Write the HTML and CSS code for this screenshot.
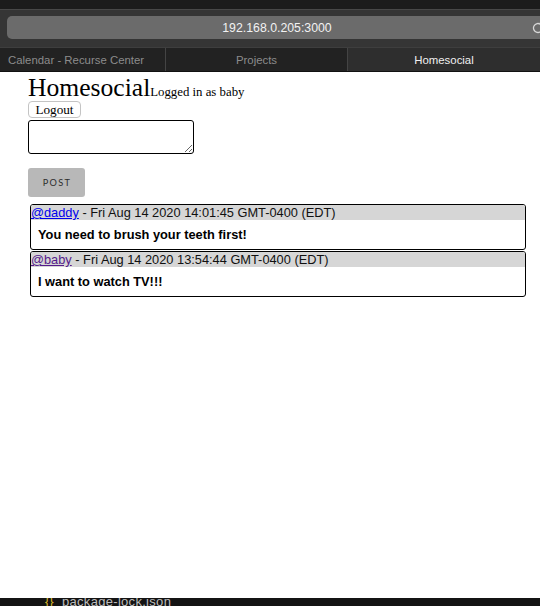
FILE: index.html
```html
<!DOCTYPE html>
<html>
<head>
<meta charset="utf-8">
<title>Homesocial</title>
<link rel="stylesheet" href="styles.css">
</head>
<body>
<div class="window">
  <div class="topbar"></div>
  <div class="toolbar">
    <div class="urlfield">
      <span class="url">192.168.0.205:3000</span>
      <svg class="reload" width="14" height="14" viewBox="0 0 14 14"><path d="M11.5 7a4.5 4.5 0 1 1-1.6-3.45" fill="none" stroke="#d8d8d8" stroke-width="1.3"/><path d="M8.6 1.6 L11.6 3.2 L9.4 5.6 Z" fill="#d8d8d8"/></svg>
    </div>
  </div>
  <div class="tabs">
    <div class="tab t1">Calendar - Recurse Center</div>
    <div class="tab t2">Projects</div>
    <div class="tab t3 active">Homesocial</div>
  </div>
  <div class="page">
    <div class="head"><span class="title">Homesocial</span><span class="who">Logged in as baby</span></div>
    <button class="logout">Logout</button>
    <textarea class="compose"></textarea>
    <button class="post">POST</button>
    <div class="feed">
      <div class="card">
        <div class="meta"><a class="user" href="#daddy">@daddy</a> - Fri Aug 14 2020 14:01:45 GMT-0400 (EDT)</div>
        <div class="body">You need to brush your teeth first!</div>
      </div>
      <div class="card">
        <div class="meta"><a class="user visited" href="#baby">@baby</a> - Fri Aug 14 2020 13:54:44 GMT-0400 (EDT)</div>
        <div class="body">I want to watch TV!!!</div>
      </div>
    </div>
  </div>
  <div class="strip"><span class="braces">{}</span><span class="fname">package-lock.json</span></div>
</div>
</body>
</html>
```
FILE: styles.css
```css
html, body {
  margin: 0;
  padding: 0;
  background: #ffffff;
}
.window {
  display: flex;
  flex-direction: column;
  height: 606px;
  overflow: hidden;
}
.topbar {
  flex: none;
  height: 10px;
  background: #1c1c1c;
  border-bottom: 1px solid #484848;
  box-sizing: border-box;
}
.toolbar {
  flex: none;
  height: 37px;
  background: #353535;
  padding-top: 6px;
  box-sizing: border-box;
  overflow: hidden;
}
.urlfield {
  position: relative;
  height: 23px;
  margin-left: 7px;
  margin-right: -7px;
  background: #6b6b6b;
  border-radius: 5px;
  display: flex;
  align-items: center;
  justify-content: center;
}
.url {
  font-family: "Liberation Sans", Arial, sans-serif;
  font-size: 12.3px;
  color: #f2f2f2;
  font-weight: 500;
}
.reload {
  position: absolute;
  right: 2px;
  top: 5px;
}
.tabs {
  flex: none;
  height: 25px;
  display: flex;
  background: #222222;
  border-top: 1px solid #3e3e3e;
  border-bottom: 1px solid #111;
  box-sizing: border-box;
  font-family: "Liberation Sans", Arial, sans-serif;
  font-size: 11.4px;
  color: #8c8c8c;
}
.tab {
  display: flex;
  align-items: center;
  box-sizing: border-box;
  white-space: nowrap;
}
.t1 {
  flex: none;
  width: 166px;
  padding-left: 8px;
  border-right: 1px solid #444;
}
.t2 {
  flex: none;
  width: 182px;
  justify-content: center;
  border-right: 1px solid #444;
}
.t3 {
  flex: 1;
  justify-content: center;
}
.tab.active {
  background: #2e2e2e;
  color: #f0f0f0;
}
.page {
  flex: 1;
  background: #ffffff;
  padding: 2px 0 0 28px;
  display: flex;
  flex-direction: column;
  align-items: flex-start;
}
.head {
  font-family: "Liberation Serif", "Times New Roman", serif;
  font-size: 25.6px;
  line-height: 28px;
  height: 26px;
  color: #000;
}
.title {
  font-size: 25.6px;
}
.who {
  font-size: 12.8px;
  line-height: 1;
}
.logout {
  margin: 1px 0 0 0;
  font-family: "Liberation Serif", "Times New Roman", serif;
  font-size: 13.2px;
  color: #000;
  background: #fff;
  border: 1px solid #c4c4c4;
  border-radius: 4px;
  height: 17px;
  width: 53px;
  padding: 0;
  line-height: 15px;
}
.compose {
  margin: 2px 0 0 0;
  width: 166px;
  height: 34px;
  box-sizing: border-box;
  border: 1px solid #000;
  border-radius: 3px;
  padding: 2px;
  font-family: "Liberation Mono", monospace;
  font-size: 11px;
  resize: both;
}
.post {
  margin: 14px 0 0 0;
  width: 57px;
  height: 29px;
  background: #b8b8b8;
  border: none;
  border-radius: 3px;
  font-family: Lato, "Open Sans", sans-serif;
  font-size: 9.2px;
  letter-spacing: 1.3px;
  color: #2e2e2e;
  padding: 0 0 0 1px;
}
.feed {
  margin: 7px 0 0 2px;
  width: 496px;
  display: flex;
  flex-direction: column;
  gap: 1px;
}
.card {
  border: 1px solid #000;
  border-radius: 3px;
  overflow: hidden;
  font-family: "Liberation Sans", Arial, sans-serif;
  font-size: 12.8px;
  line-height: 15px;
}
.meta {
  background: #d6d6d6;
  color: #111;
  height: 15px;
}
.user {
  color: #0000ee;
  text-decoration: underline;
}
.user.visited {
  color: #551a8b;
}
.body {
  font-weight: bold;
  color: #000;
  padding: 7px;
}
.strip {
  flex: none;
  height: 8px;
  background: #141414;
  overflow: hidden;
  font-family: "Liberation Sans", Arial, sans-serif;
  font-size: 13px;
  line-height: 14px;
  color: #bdbdbd;
  padding-left: 45px;
  white-space: nowrap;
  display: flex;
  align-items: flex-start;
}
.braces {
  color: #d7b62a;
  margin-top: -3px;
  width: 17px;
}
.fname {
  margin-top: -3px;
  letter-spacing: 0.3px;
}
```
